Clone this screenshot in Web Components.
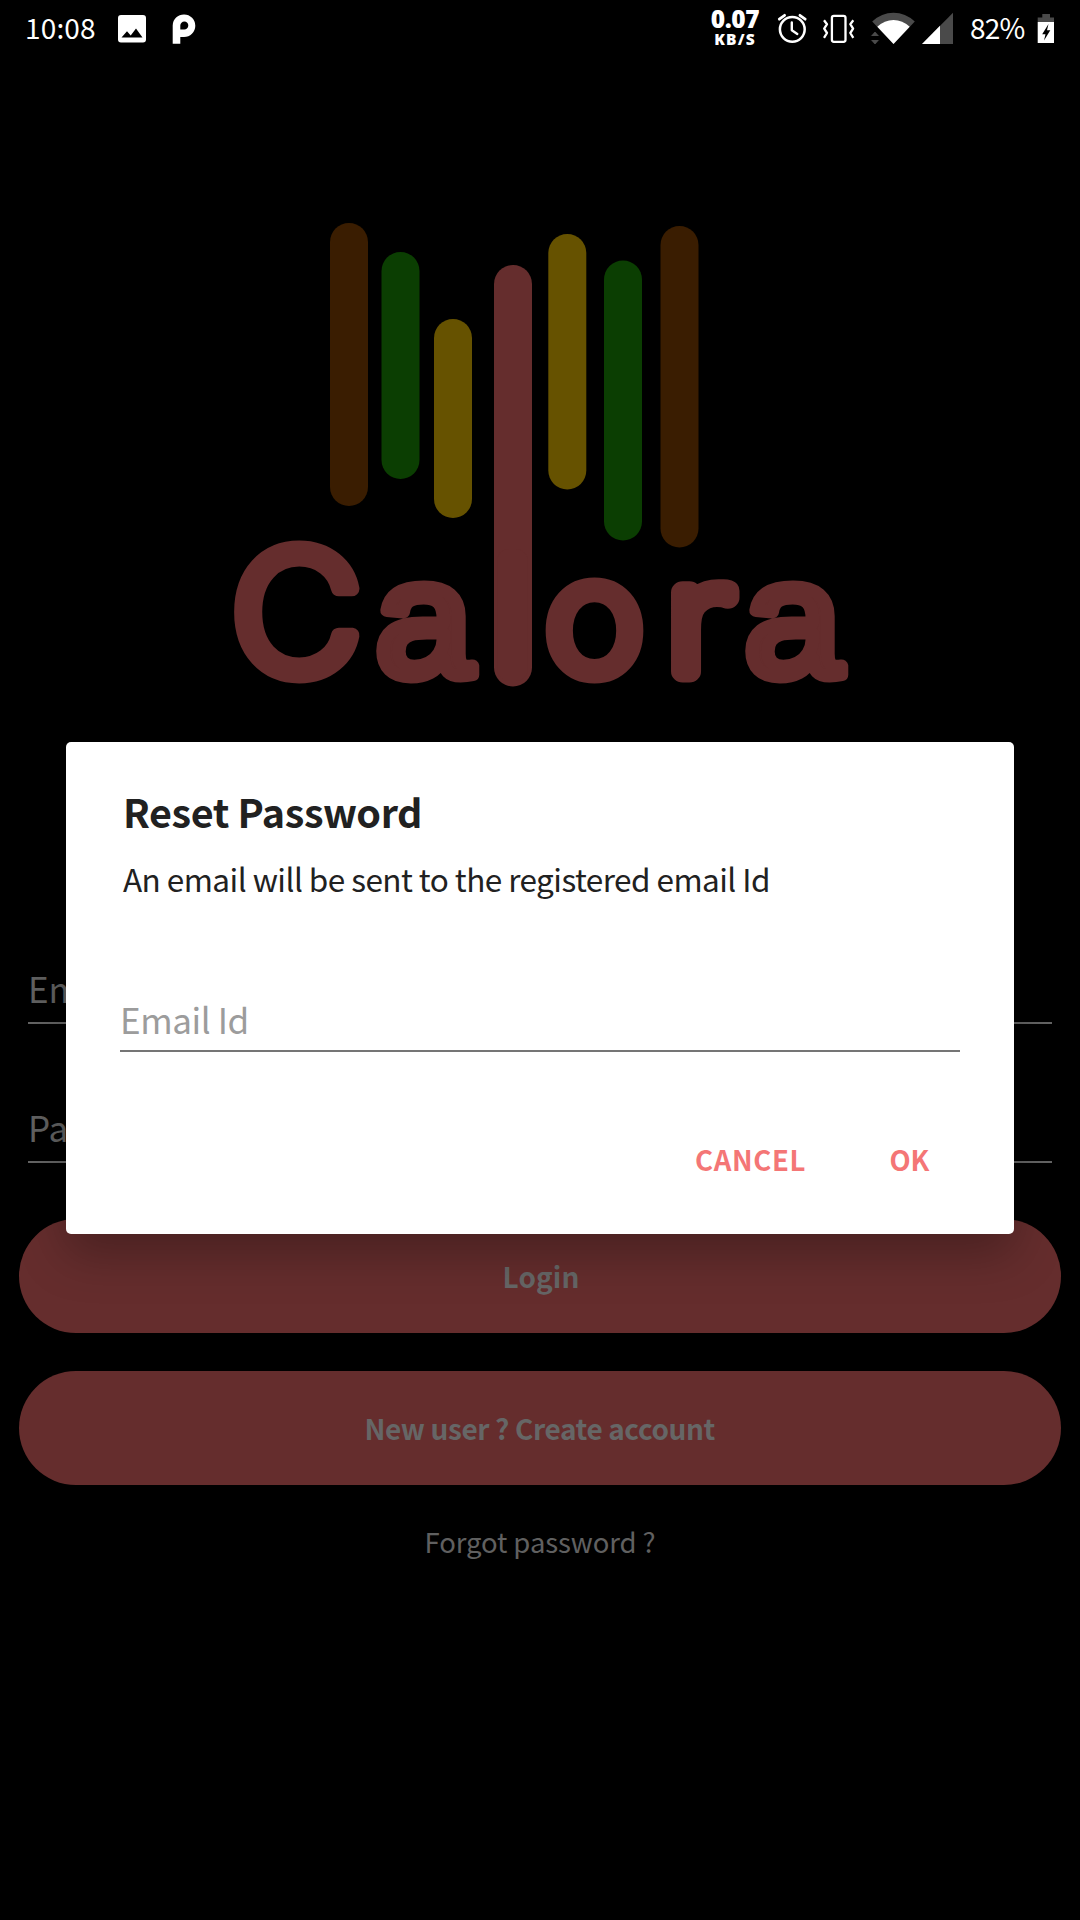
<!DOCTYPE html>
<html lang="en">
<head>
<meta charset="utf-8">
<title>Calora</title>
<style>
html,body{margin:0;background:#000}
body{width:1080px;height:1920px;overflow:hidden;font-family:"Noto Sans CJK JP","Noto Sans",sans-serif}
</style>
</head>
<body>
<calora-app></calora-app>
<script>
const FAMILY = '"Noto Sans CJK JP","Noto Sans",sans-serif';
const pen = document.createElement('canvas').getContext('2d');

function define(name, html, setup) {
  const tpl = document.createElement('template');
  tpl.innerHTML = html;
  customElements.define(name, class extends HTMLElement {
    constructor() {
      super();
      this.attachShadow({mode: 'open'}).append(tpl.content.cloneNode(true));
    }
    connectedCallback() { if (setup) setup(this, this.shadowRoot); }
  });
}

// One line of text, tracked so that its ink spans exactly `span` pixels.
customElements.define('text-run', class extends HTMLElement {
  static observedAttributes = ['text', 'span'];
  connectedCallback() { this.draw(); }
  attributeChangedCallback() { if (this.isConnected) this.draw(); }
  draw() {
    const text = this.getAttribute('text');
    if (!text) return;
    const root = this.shadowRoot || this.attachShadow({mode: 'open'});
    const size = +this.getAttribute('size');
    const weight = this.getAttribute('weight') || 400;
    const family = this.getAttribute('family') || FAMILY;
    const line = this.getAttribute('line') || 40;
    pen.font = `${weight} ${size}px ${family}`;
    const m = pen.measureText(text);
    const ink = m.actualBoundingBoxLeft + m.actualBoundingBoxRight;
    const span = +this.getAttribute('span') || ink;
    const track = (span - ink) / (text.length - 1);
    root.innerHTML = `<style>
      :host{display:block;flex:none;width:${span}px;height:${line}px}
      span{display:block;white-space:pre;font:${weight} ${size}px/${line}px ${family};
        letter-spacing:${track}px;margin-left:${m.actualBoundingBoxLeft}px}
    </style><span></span>`;
    root.querySelector('span').textContent = text;
  }
});

define('net-speed', `<style>
  :host{display:flex;flex-direction:column;align-items:center;width:50px;height:54px;box-sizing:border-box;padding-top:6px}
</style>
<text-run text="0.07" size="24.500" weight="800" family="Open Sans" span="48.500" line="26"></text-run>
<text-run text="KB/S" size="15.500" weight="800" family="Open Sans" span="39.500" line="14"></text-run>`);

define('status-bar', `<style>
  :host{display:flex;height:54px;align-items:center;padding:0 26px 0 27px;color:#fff}
  svg{display:block;flex:none}
  .grow{flex:1}
</style>
<text-run text="10:08" size="28" span="68" line="54"></text-run>
<svg style="margin-left:23px" width="28" height="54" viewBox="118 0 28 54">
  <path fill="#fff" fill-rule="evenodd" d="M121 15h22a3 3 0 0 1 3 3v21.500a3 3 0 0 1-3 3h-22a3 3 0 0 1-3-3V18a3 3 0 0 1 3-3zM121.500 37.600h21l-6.500-9-5.300 7-3.700-4.300z"/>
</svg>
<svg style="margin-left:26px" width="24" height="54" viewBox="172 0 24 54">
  <path fill="#fff" fill-rule="evenodd" d="M172.700 43.700V25.500A11.300 11.300 0 1 1 184 37H180.300V43.700zM180.300 29.500H184A4 4 0 1 0 180.300 25.500z"/>
</svg>
<div class="grow"></div>
<net-speed></net-speed>
<svg style="margin-left:17px" width="31" height="54" viewBox="777 0 31 54" fill="none" stroke="#fff">
  <circle cx="792.300" cy="29.300" r="12.400" stroke-width="2.500"/>
  <path stroke-width="2.400" stroke-linecap="round" stroke-linejoin="round" d="M791.800 22.500v7.800l5.500 3.600"/>
  <path stroke-width="2.700" stroke-linecap="round" d="M779.300 19.200l5.300-3.900M805.200 19.200l-5.300-3.900"/>
</svg>
<svg style="margin-left:14px" width="34" height="54" viewBox="822 0 34 54" fill="none" stroke="#fff" stroke-linejoin="round">
  <rect x="831.900" y="15.800" width="13.600" height="26" rx="2" stroke-width="2.300"/>
  <path stroke-width="2.300" d="M824 20.300l3 3.900-2.800 4.500 2.800 4.300-3 4.900M853.300 20.300l-3 3.900 2.800 4.500-2.800 4.300 3 4.900"/>
</svg>
<svg style="margin-left:14px" width="46" height="54" viewBox="870 0 46 54">
  <path fill="#4a4a4a" d="M893.500 44L872.200 21.500Q881.500 12.700 893.500 12.700T914.800 21.500z"/>
  <path fill="#fff" d="M893.500 44L877.300 26.800Q884.500 20 893.500 20T909.700 26.800z"/>
  <path fill="#4a4a4a" stroke="#000" stroke-width="1" d="M870 36.500L875 31l5 5.500zM870 39.500L875 45l5-5.500z"/>
</svg>
<svg style="margin-left:6px" width="31" height="54" viewBox="922 0 31 54">
  <path fill="#4a4a4a" d="M922 44L953 12.700V44z"/><path fill="#fff" d="M922 44L940 25.800V44z"/>
</svg>
<text-run style="margin-left:18px" text="82%" size="28" span="53.500" line="54"></text-run>
<svg style="margin-left:12.500px" width="17" height="54" viewBox="1037 0 17 54">
  <path fill="#4a4a4a" d="M1037.700 22v-4.500h4.600V14h7.700v3.500h4V22z"/>
  <path fill="#fff" d="M1037.700 22H1054v21h-16.300z"/>
  <path fill="#000" d="M1048.500 24l-6.300 10.300h3.300L1044 40.500l6.300-10.300H1047z"/>
</svg>`);

define('brand-logo', `<style>
  :host{display:flex;justify-content:center;flex:none}
  svg{display:block;overflow:visible}
  text{font:200 144px "DejaVu Sans","DejaVu Sans Light",sans-serif;fill:#652d2d;stroke:#652d2d;stroke-width:22px;stroke-linejoin:round}
  .c{font:300 171px Inter,sans-serif;stroke-width:15px}
  .o{font:300 160px Inter,sans-serif;stroke-width:15px}
  .a{font:400 164px "Liberation Sans",sans-serif;stroke-width:13px}
</style>
<svg width="614" height="464" viewBox="233 223 614 464">
  <g fill="#3a1d01"><rect x="330" y="223" width="38" height="283" rx="19"/><rect x="660.500" y="226" width="38" height="321.500" rx="19"/></g>
  <g fill="#0b3e02"><rect x="381.500" y="252" width="38" height="227" rx="19"/><rect x="604" y="260.500" width="38" height="280" rx="19"/></g>
  <g fill="#665200"><rect x="434" y="319" width="38" height="199" rx="19"/><rect x="548.300" y="234" width="38" height="255.500" rx="19"/></g>
  <rect x="494" y="265" width="38" height="421.500" rx="19" fill="#652d2d"/>
  <text transform="scale(1.06 1)" x="217.500 354.500 464 513.500 627.500 702.500" y="674 675.500 670.400 674 671.500 675.500"><tspan class="c">C</tspan><tspan class="a">a</tspan>l<tspan class="o">o</tspan>r<tspan class="a">a</tspan></text>
</svg>`);

define('line-field', `<style>
  :host{display:block;box-sizing:border-box;border-bottom:2px solid var(--line);color:var(--hint)}
  text-run{margin-left:3px;padding-top:var(--drop,0px)}
</style><text-run size="35" line="50"></text-run>`, (el, root) => {
  const run = root.querySelector('text-run');
  if (el.hasAttribute('span')) run.setAttribute('span', el.getAttribute('span'));
  run.setAttribute('text', el.getAttribute('label'));
});

define('pill-button', `<style>
  :host{display:flex;box-sizing:border-box;height:114px;border-radius:57px;background:#652d2d;color:#666;
    align-items:center;justify-content:center;padding:0 0 1px 2px}
</style><slot></slot>`);

define('login-form', `<style>
  :host{display:flex;flex-direction:column;padding:0 19px}
  line-field{--line:#646464;--hint:#616161;--drop:1px;height:62px;margin:0 9px}
  .second{margin-top:77px}
  pill-button{margin-top:56px}
  pill-button + pill-button{margin-top:38px}
  .forgot{display:flex;justify-content:center;margin-top:36px;padding-left:1px;color:#606060}
</style>
<line-field label="Email"></line-field>
<line-field class="second" label="Password"></line-field>
<pill-button><text-run text="Login" size="28" weight="700" span="73"></text-run></pill-button>
<pill-button><text-run text="New user ? Create account" size="28" weight="700" span="349"></text-run></pill-button>
<div class="forgot"><text-run text="Forgot password ?" size="27.500" span="228"></text-run></div>`);

define('reset-dialog', `<style>
  :host{position:absolute;inset:0;display:flex;flex-direction:column;padding:742px 66px 0}
  section{display:flex;flex-direction:column;box-sizing:border-box;height:492px;background:#fff;border-radius:5px;
    padding:45px 54px 0;box-shadow:0 20px 48px rgba(0,0,0,.28);color:#212121}
  .title{margin-left:6px}
  .msg{margin:23px 0 0 3px}
  line-field{--line:#757575;--hint:#9c9c9c;height:58px;margin-top:96px}
  .actions{display:flex;justify-content:flex-end;gap:86px;margin-top:87px;padding-right:30.500px;color:#f47676}
</style>
<section>
  <text-run class="title" text="Reset Password" size="39.500" weight="700" span="294" line="48"></text-run>
  <text-run class="msg" text="An email will be sent to the registered email Id" size="31.500" span="645"></text-run>
  <line-field label="Email Id" span="123.500"></line-field>
  <div class="actions">
    <text-run text="CANCEL" size="27.500" weight="700" span="108.500"></text-run>
    <text-run text="OK" size="27.500" weight="700" span="39"></text-run>
  </div>
</section>`);

define('calora-app', `<style>
  :host{display:flex;flex-direction:column;position:relative;width:1080px;height:1920px;overflow:hidden;background:#000}
  brand-logo{margin-top:169px}
  login-form{margin-top:275px}
</style>
<status-bar></status-bar>
<brand-logo></brand-logo>
<login-form></login-form>
<reset-dialog></reset-dialog>`);
</script>
</body>
</html>
